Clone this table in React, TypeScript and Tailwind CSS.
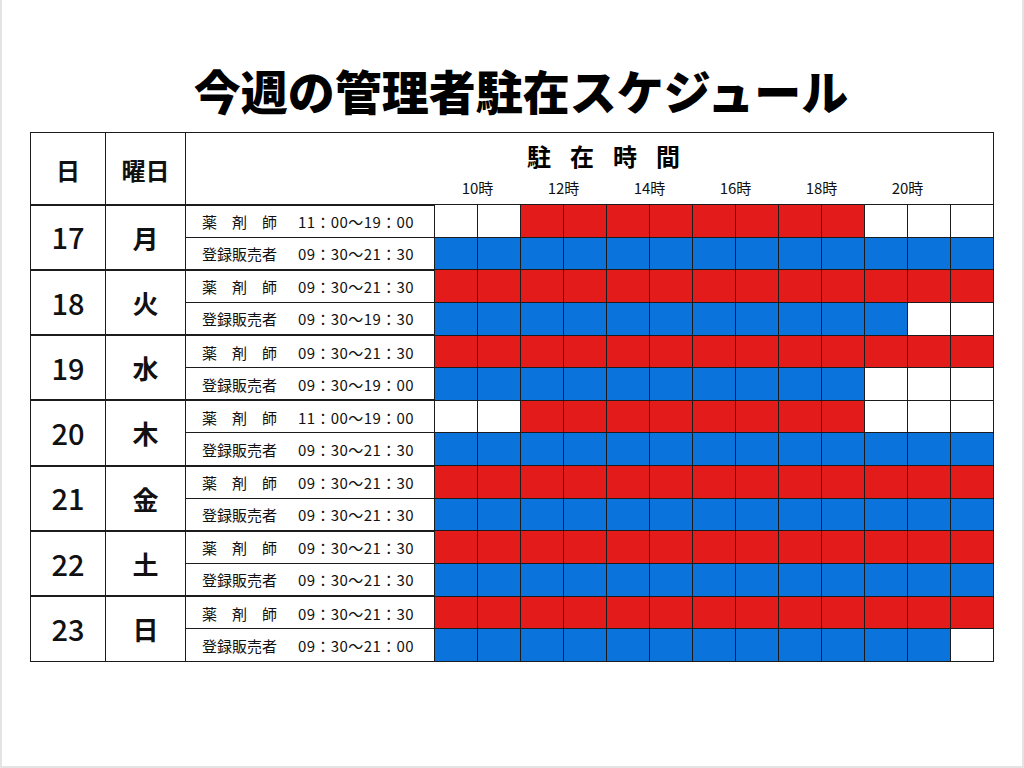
import React from "react";

type Day = {
  d: string;
  w: string;
  p: string;
  ps: number;
  pe: number;
  r: string;
  rs: number;
  re: number;
};

const days: Day[] = [
  { d: "17", w: "月", p: "11：00〜19：00", ps: 2, pe: 9, r: "09：30〜21：30", rs: 0, re: 12 },
  { d: "18", w: "火", p: "09：30〜21：30", ps: 0, pe: 12, r: "09：30〜19：30", rs: 0, re: 10 },
  { d: "19", w: "水", p: "09：30〜21：30", ps: 0, pe: 12, r: "09：30〜19：00", rs: 0, re: 9 },
  { d: "20", w: "木", p: "11：00〜19：00", ps: 2, pe: 9, r: "09：30〜21：30", rs: 0, re: 12 },
  { d: "21", w: "金", p: "09：30〜21：30", ps: 0, pe: 12, r: "09：30〜21：30", rs: 0, re: 12 },
  { d: "22", w: "土", p: "09：30〜21：30", ps: 0, pe: 12, r: "09：30〜21：30", rs: 0, re: 12 },
  { d: "23", w: "日", p: "09：30〜21：30", ps: 0, pe: 12, r: "09：30〜21：00", rs: 0, re: 11 },
];

const hours = ["10", "12", "14", "16", "18", "20"];
const cells = Array.from({ length: 13 }, (_, i) => i);

function Cells({ s, e, color, top }: { s: number; e: number; color: "red" | "blue"; top?: boolean }) {
  return (
    <>
      {cells.map((i) => {
        const on = i >= s && i <= e;
        const bg = on ? (color === "red" ? "bg-[#e41b1b]" : "bg-[#0b73dc]") : "bg-white";
        return (
          <td
            key={i}
            className={`p-0 border border-[#1c1c1c] ${top ? "border-t-[1.5px]" : ""} ${bg}`}
          />
        );
      })}
    </>
  );
}

export default function App() {
  return (
    <div className="w-[1024px] h-[768px] bg-white border-l-2 border-r-2 border-b-2 border-[#e3e3e3] box-border font-['Noto_Sans_CJK_JP',sans-serif] text-[#111]">
      <div className="pt-[66px] h-[113px] box-border flex justify-center pl-[18px]">
        <h1 className="text-[47px] leading-[47px] font-black text-black tracking-[0px]">
          今週の管理者駐在スケジュール
        </h1>
      </div>
      <table className="border-collapse table-fixed w-[963px] ml-[28px] mt-[19px]">
        <colgroup>
          <col className="w-[75px]" />
          <col className="w-[80px]" />
          <col className="w-[249px]" />
          {cells.map((i) => (
            <col key={i} className="w-[43px]" />
          ))}
        </colgroup>
        <thead>
          <tr className="h-[40px]">
            <th
              rowSpan={2}
              className="p-0 pt-[3px] border border-[#1c1c1c] text-[24px] font-bold text-center align-middle"
            >
              日
            </th>
            <th
              rowSpan={2}
              className="p-0 pt-[3px] border border-[#1c1c1c] text-[24px] font-bold text-center align-middle"
            >
              曜日
            </th>
            <th colSpan={14} className="p-0 pt-[11px] border-t border-r border-l border-[#1c1c1c] align-top">
              <div className="flex pl-[341px] text-[24px] leading-[24px] font-bold text-black">
                {["駐", "在", "時", "間"].map((c) => (
                  <span key={c} className="w-[43px] text-left">
                    {c}
                  </span>
                ))}
              </div>
            </th>
          </tr>
          <tr className="h-[32px]">
            <td className="p-0 border-l border-[#1c1c1c]" />
            {hours.map((h) => (
              <td key={h} colSpan={2} className="p-0 text-center text-[15px] leading-[16px] align-middle">
                {h}時
              </td>
            ))}
            <td className="p-0 border-r border-[#1c1c1c]" />
          </tr>
        </thead>
        <tbody>
          {days.map((day) => (
            <React.Fragment key={day.d}>
              <tr className="h-[32.64px]">
                <td
                  rowSpan={2}
                  className="p-0 border border-[#1c1c1c] border-t-2 text-[29px] font-medium text-center align-middle"
                >
                  {day.d}
                </td>
                <td
                  rowSpan={2}
                  className="p-0 border border-[#1c1c1c] border-t-2 text-[26px] font-bold text-center align-middle"
                >
                  {day.w}
                </td>
                <td className="p-0 pl-[16px] border border-[#1c1c1c] border-t-2 align-middle">
                  <div className="flex items-center text-[15px] leading-[18px] pt-[2px]">
                    <span className="w-[75px] flex justify-between">
                      <span>薬</span>
                      <span>剤</span>
                      <span>師</span>
                    </span>
                    <span className="ml-[21px] tracking-[0.4px]">{day.p}</span>
                  </div>
                </td>
                <Cells s={day.ps} e={day.pe} color="red" top />
              </tr>
              <tr className="h-[32.64px]">
                <td className="p-0 pl-[16px] border border-[#1c1c1c] align-middle">
                  <div className="flex items-center text-[15px] leading-[18px] pt-[2px]">
                    <span className="w-[75px]">登録販売者</span>
                    <span className="ml-[21px] tracking-[0.4px]">{day.r}</span>
                  </div>
                </td>
                <Cells s={day.rs} e={day.re} color="blue" />
              </tr>
            </React.Fragment>
          ))}
        </tbody>
      </table>
    </div>
  );
}
